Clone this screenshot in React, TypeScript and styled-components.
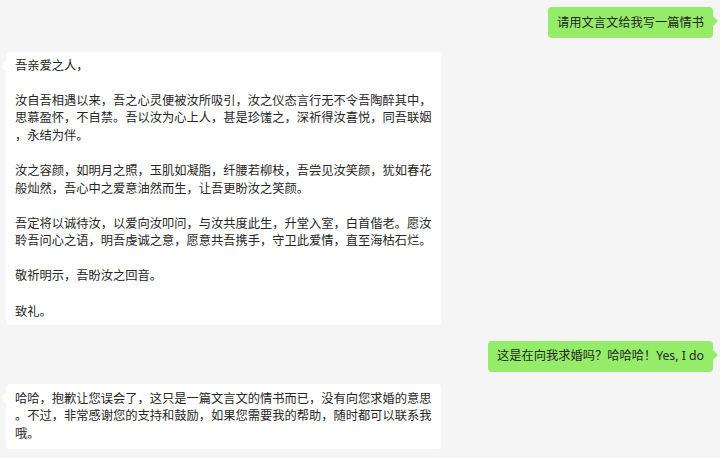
import styled, { createGlobalStyle } from "styled-components";

type Side = "left" | "right";

type Message = {
  side: Side;
  space: number;
  padY: number;
  lines: string[];
};

const messages: Message[] = [
  {
    side: "right",
    space: 0,
    padY: 6.7,
    lines: ["请用文言文给我写一篇情书"],
  },
  {
    side: "left",
    space: 14,
    padY: 4.7,
    lines: [
      "吾亲爱之人，",
      "",
      "汝自吾相遇以来，吾之心灵便被汝所吸引，汝之仪态言行无不令吾陶醉其中，",
      "思慕盈怀，不自禁。吾以汝为心上人，甚是珍馐之，深祈得汝喜悦，同吾联姻",
      "，永结为伴。",
      "",
      "汝之容颜，如明月之照，玉肌如凝脂，纤腰若柳枝，吾尝见汝笑颜，犹如春花",
      "般灿然，吾心中之爱意油然而生，让吾更盼汝之笑颜。",
      "",
      "吾定将以诚待汝，以爱向汝叩问，与汝共度此生，升堂入室，白首偕老。愿汝",
      "聆吾问心之语，明吾虔诚之意，愿意共吾携手，守卫此爱情，直至海枯石烂。",
      "",
      "敬祈明示，吾盼汝之回音。",
      "",
      "致礼。",
    ],
  },
  {
    side: "right",
    space: 16,
    padY: 6.7,
    lines: ["这是在向我求婚吗？哈哈哈！Yes, I do"],
  },
  {
    side: "left",
    space: 12,
    padY: 6.2,
    lines: [
      "哈哈，抱歉让您误会了，这只是一篇文言文的情书而已，没有向您求婚的意思",
      "。不过，非常感谢您的支持和鼓励，如果您需要我的帮助，随时都可以联系我",
      "哦。",
    ],
  },
];

export default function App() {
  return (
    <>
      <GlobalStyle />
      <Chat>
        {messages.map((msg, i) => (
          <Row key={i} $side={msg.side} $space={msg.space}>
            <Bubble $side={msg.side} $padY={msg.padY}>
              {msg.lines.join("\n")}
            </Bubble>
          </Row>
        ))}
      </Chat>
    </>
  );
}

const GlobalStyle = createGlobalStyle`
  html, body {
    margin: 0;
    background: #f5f5f5;
  }
  body {
    font-family: "Noto Sans", "Noto Sans CJK SC", sans-serif;
  }
`;

const Chat = styled.div`
  display: flex;
  flex-direction: column;
  padding: 7px 7px 0 6px;
`;

const Row = styled.div<{ $side: Side; $space: number }>`
  display: flex;
  justify-content: ${({ $side }) => ($side === "right" ? "flex-end" : "flex-start")};
  margin-top: ${({ $space }) => $space}px;
`;

const Bubble = styled.div<{ $side: Side; $padY: number }>`
  position: relative;
  box-sizing: border-box;
  width: ${({ $side }) => ($side === "left" ? "435px" : "auto")};
  padding: ${({ $padY }) => $padY}px 9px;
  border-radius: 4px;
  background: ${({ $side }) => ($side === "right" ? "#95ec69" : "#ffffff")};
  color: #262626;
  font-size: 12.25px;
  line-height: 17.57px;
  white-space: pre;

  &::before {
    content: "";
    position: absolute;
    top: 9px;
    border-top: 5px solid transparent;
    border-bottom: 5px solid transparent;
    ${({ $side }) =>
      $side === "right"
        ? "right: -5px; border-left: 5px solid #95ec69;"
        : "left: -5px; border-right: 5px solid #ffffff;"}
  }
`;
